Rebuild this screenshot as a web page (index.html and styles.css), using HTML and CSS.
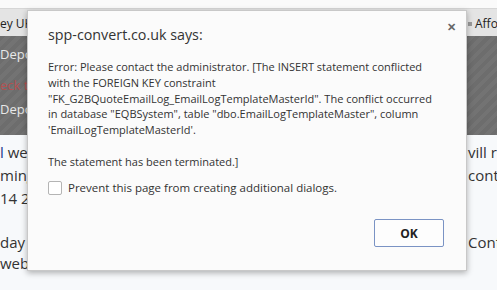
FILE: index.html
```html
<!DOCTYPE html>
<html lang="en">
<head>
  <meta charset="UTF-8">
  <title>spp-convert.co.uk</title>
  <link rel="stylesheet" href="styles.css">
</head>
<body>
  <div class="page">
    <div class="top-strip"></div>
    <div class="bookmarks">
      <span class="bm-left">ey UK</span>
      <span class="bm-right"><i class="bm-icon"></i>Affo</span>
    </div>
    <div class="hero">
      <div class="hero-line">Depos</div>
      <div class="hero-line red">eck to</div>
      <div class="hero-line">Depos</div>
    </div>
    <div class="content">
      <div class="row"><span><b class="link">l</b> we</span><span>vill re</span></div>
      <div class="row"><span>ming</span><span>cont<em>a</em></span></div>
      <div class="row"><span>14 2</span></div>
      <div class="row gap"><span>day</span><span>Conf<em>i</em></span></div>
      <div class="row"><span>web</span></div>
    </div>
  </div>

  <div class="dialog">
    <div class="dialog-head">
      <h1>spp-convert.co.uk says:</h1>
      <span class="close">&#x2715;</span>
    </div>
    <p class="message">Error: Please contact the administrator. [The INSERT statement conflicted
with the FOREIGN KEY constraint
"FK_G2BQuoteEmailLog_EmailLogTemplateMasterId". The conflict occurred
in database "EQBSystem", table "dbo.EmailLogTemplateMaster", column
'EmailLogTemplateMasterId'.

The statement has been terminated.]</p>
    <label class="prevent"><span class="box"></span>Prevent this page from creating additional dialogs.</label>
    <div class="actions">
      <button class="ok">OK</button>
    </div>
  </div>
</body>
</html>
```

FILE: styles.css
```css
* { box-sizing: border-box; margin: 0; padding: 0; }
body {
  font-family: 'Open Sans', 'Noto Sans', sans-serif;
  background: #f7f9fb;
  color: #333;
  width: 497px;
  height: 290px;
  overflow: hidden;
}
.page {
  display: flex;
  flex-direction: column;
}
.top-strip {
  height: 8px;
  background: #fafafa;
}
.bookmarks {
  height: 28px;
  background: #e4e4e4;
  border-top: 1px solid #d6d6d6;
  display: flex;
  justify-content: space-between;
  align-items: center;
  font-size: 12px;
  color: #222;
  padding-top: 2px;
}
.bm-right {
  display: flex;
  align-items: center;
  gap: 3px;
  width: 29px;
  white-space: nowrap;
}
.bm-icon {
  width: 4px;
  height: 4px;
  flex-shrink: 0;
  background: #999;
  display: inline-block;
}
.hero {
  height: 99px;
  background: repeating-linear-gradient(135deg, #6d6d6d 0 4px, #737373 4px 8px);
  padding-top: 6px;
  font-size: 13px;
  color: #e8e8e8;
}
.hero-line {
  line-height: 24px;
}
.hero-line.red {
  color: #b45050;
  margin-top: 7px;
}
.content {
  padding-top: 6px;
  font-size: 15px;
  color: #333;
}
.row {
  display: flex;
  justify-content: space-between;
  line-height: 23px;
}
.row.gap { margin-top: 21px; }
.row span + span {
  width: 29px;
  white-space: nowrap;
}
.row:last-child { line-height: 19px; }
.link { color: #1a3c8e; font-weight: normal; }
.row em { font-style: normal; color: #c6882f; }

.dialog {
  position: absolute;
  left: 27px;
  top: 10px;
  width: 440px;
  height: 261px;
  background: #fbfbfb;
  border: 1px solid #c8c8c8;
  box-shadow: 0 2px 6px rgba(0,0,0,0.3);
  padding: 0 20px;
  display: flex;
  flex-direction: column;
}
.dialog-head {
  display: flex;
  justify-content: space-between;
  align-items: flex-start;
  padding-top: 14px;
}
.dialog-head h1 {
  font-weight: normal;
  font-size: 14.3px;
  color: #333;
}
.close {
  font-size: 11px;
  color: #666;
  font-weight: bold;
  margin-right: -10px;
  margin-top: -6px;
}
.message {
  white-space: pre;
  font-size: 11px;
  line-height: 15.75px;
  color: #333;
  margin-top: 15px;
}
.prevent {
  display: flex;
  align-items: center;
  gap: 6px;
  font-size: 11.5px;
  margin-top: 11px;
}
.box {
  width: 14px;
  height: 14px;
  border: 1px solid #b4b4b4;
  border-radius: 2px;
  background: #fff;
}
.actions {
  display: flex;
  justify-content: flex-end;
  margin-top: 24px;
  margin-right: 2px;
}
.ok {
  width: 70px;
  height: 28px;
  border: 1px solid #7a93c4;
  border-radius: 2px;
  background: #fdfdfd;
  font-family: inherit;
  font-weight: bold;
  font-size: 12px;
  color: #222;
}
```
